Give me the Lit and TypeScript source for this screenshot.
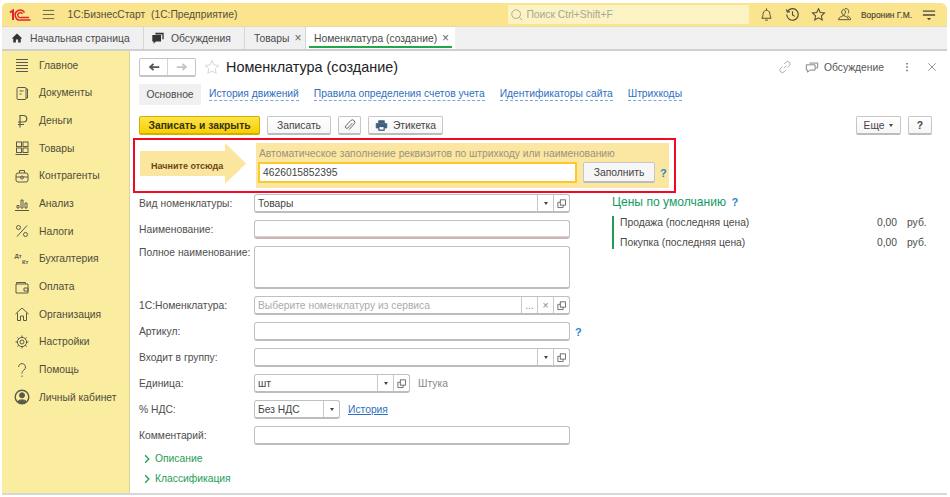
import { LitElement, html, css, svg } from 'lit';
import { customElement } from 'lit/decorators.js';

const icon = (size: number, body: unknown, color = '#5a5a4a', width = 1) => html`
  <svg width=${size} height=${size} viewBox="0 0 16 16" fill="none" stroke=${color} stroke-width=${width}>${body}</svg>
`;

const menuIcons: Record<string, unknown> = {
  main: svg`<path d="M2 2.500h12M2 5.500h12M2 8.500h12M2 11.500h12M2 14.500h12"/>`,
  docs: svg`<rect x="3" y="2.500" width="9" height="12" rx="1"/><path d="M12 4h1.500v9H12M5.500 6h4M5.500 9h2"/>`,
  money: svg`<path d="M6 14.500V2.500h3.500a3 3 0 0 1 0 6.500H4M4 11.500h6" stroke-width="1.200"/>`,
  goods: svg`<rect x="2.500" y="2" width="5" height="4.500"/><rect x="9" y="2" width="5" height="4.500"/><rect x="2.500" y="8" width="5" height="4.500"/><rect x="9" y="8" width="5" height="4.500"/><path d="M1.500 14.500h13"/>`,
  partners: svg`<rect x="2" y="5" width="12" height="9" rx="2"/><path d="M5.500 5V2.500h5V5M2 9h12"/><circle cx="8" cy="9.500" r="1.500"/>`,
  analysis: svg`<path d="M1 14.500h14M3 12V9.500h2V12zM7 12V4h2v8zM11 12V7h2v5z"/>`,
  tax: svg`<circle cx="4.500" cy="4.500" r="2"/><circle cx="11.500" cy="11.500" r="2"/><path d="M13 2.500 3 13.500"/>`,
  pay: svg`<path d="M2.500 5V3.500h9V5M2 5h12v9H2zM10 9h4v3h-4z"/>`,
  org: svg`<path d="M1.500 8 8 2l6.500 6M3.500 7v7.500h3V10h3v4.500h3V7"/>`,
  settings: svg`<circle cx="8" cy="8" r="2"/><circle cx="8" cy="8" r="4.600"/><path d="M8 1.500v2M8 12.500v2M1.500 8h2M12.500 8h2M3.400 3.400l1.400 1.400M11.200 11.200l1.400 1.400M3.400 12.600l1.400-1.400M11.200 4.800l1.400-1.400"/>`,
  help: svg`<path d="M4.500 5a3.500 3.500 0 1 1 5.500 3C8.700 9 8 9.700 8 11.500M8 13.500v1.500"/>`,
  cabinet: svg`<circle cx="8" cy="8" r="6.800" stroke-width="1.400"/><circle cx="8" cy="6.300" r="2.500" fill="#5a5a4a"/><path d="M3.600 12.600C4.600 10.300 11.400 10.300 12.400 12.600 11 14.600 5 14.600 3.600 12.600z" fill="#5a5a4a"/>`,
};

const menu = [
  ['main', 'Главное'],
  ['docs', 'Документы'],
  ['money', 'Деньги'],
  ['goods', 'Товары'],
  ['partners', 'Контрагенты'],
  ['analysis', 'Анализ'],
  ['tax', 'Налоги'],
  ['acc', 'Бухгалтерия'],
  ['pay', 'Оплата'],
  ['org', 'Организация'],
  ['settings', 'Настройки'],
  ['help', 'Помощь'],
  ['cabinet', 'Личный кабинет'],
];

const copyIcon = svg`<rect x="6.500" y="3.500" width="6.500" height="6.500"/><path d="M6.500 6.500H3.500V13H10V10"/>`;

@customElement('app-root')
class AppRoot extends LitElement {
  static styles = css`
    :host {
      display: block;
      width: 950px;
      height: 497px;
      overflow: hidden;
      background: #fff;
      font-family: 'Liberation Sans', Arial, sans-serif;
      font-size: 10.3px;
      color: #4a4a4a;
    }
    * { box-sizing: border-box; }
    svg { display: block; flex: none; }
    .app { margin: 3px 3px 0 2px; height: 492px; display: flex; flex-direction: column; border-bottom: 2px solid #d8d8d8; }

    .topbar {
      height: 24px;
      flex: none;
      background: #fae48e;
      border-radius: 5px 6px 0 0;
      display: flex;
      align-items: center;
      border-bottom: 1px solid #e9dca0;
    }
    .logo { margin-left: 7px; width: 23px; }
    .burger { margin-left: 11px; }
    .app-title { margin-left: 12px; width: 451px; color: #55513a; white-space: pre; }
    .search {
      width: 246px;
      height: 19px;
      background: #fcf3c4;
      display: flex;
      align-items: center;
      gap: 2px;
      padding-left: 2px;
      color: #a9a68f;
    }
    .top-icons { display: flex; align-items: center; margin-left: 10px; }
    .top-icons svg { margin-right: 11px; }
    .user { font-size: 8.4px; color: #4a4636; margin-left: -2px; width: 61px; white-space: nowrap; -webkit-text-stroke: 0.15px #4a4636; }

    .tabs {
      height: 24px;
      flex: none;
      background: #f0f0f0;
      border-bottom: 2px solid #cfcfcf;
      display: flex;
    }
    .tab { display: flex; align-items: center; border-right: 1px solid #d6d6d6; color: #4a4a4a; white-space: nowrap; }
    .tab .close { margin-left: 5px; font-size: 12px; color: #666; }
    .tab.home { width: 142px; padding-left: 9px; gap: 7px; }
    .tab.disc { width: 101px; padding-left: 7px; gap: 6px; }
    .tab.goods { width: 61px; padding-left: 9px; }
    .tab.active { width: 149px; padding-left: 8px; background: #fff; position: relative; border-right: 0; }
    .tab.active::after { content: ''; position: absolute; left: 3px; right: 3px; bottom: 1px; height: 2px; background: #22a64a; }

    .body { flex: 1; display: flex; min-height: 0; }
    .side { width: 128px; flex: none; background: #fbeda0; border-right: 1px solid #d9d2a4; padding-top: 0.5px; }
    .side-item { height: 27.67px; display: flex; align-items: center; color: #4f4c3a; }
    .side-icon { width: 37px; display: flex; justify-content: center; padding-left: 2px; }
    .acc { font-size: 6px; line-height: 6px; font-weight: bold; width: 14px; color: #5a5a4a; }
    .acc span { display: block; }
    .acc span + span { text-align: right; }

    .content { flex: 1; padding: 6px 0 0 9px; min-width: 0; }
    .head { display: flex; align-items: center; height: 20px; padding-right: 9px; }
    .nav { width: 57px; height: 19px; border: 1px solid #c4c4c4; border-bottom-width: 2px; border-radius: 2px; display: flex; }
    .nav div { flex: 1; display: flex; align-items: center; justify-content: center; }
    .nav div + div { border-left: 1px solid #d4d4d4; }
    .star { margin-left: 8px; }
    h1 { font-size: 14.4px; font-weight: normal; margin: 0 0 0 6px; color: #222; flex: 1; white-space: nowrap; }
    .discuss { display: flex; align-items: center; gap: 5px; color: #555; margin-left: 13px; }
    .dots { margin-left: 17px; }
    .x { margin-left: 13px; }

    .links { display: flex; align-items: center; height: 21px; margin-top: 7px; }
    .links .current { background: #f0f0f0; height: 21px; width: 62px; display: flex; align-items: center; justify-content: center; margin-right: 8px; }
    .link { color: #2f6fbf; border-bottom: 1px dashed #7ba6d8; line-height: 12px; margin-right: 15px; white-space: nowrap; }

    .actions { display: flex; margin-top: 11px; height: 19px; gap: 7px; padding-right: 15px; }
    .btn {
      height: 19px;
      border: 1px solid #c6c6c6;
      border-bottom: 2px solid #bcbcbc;
      border-radius: 2px;
      background: linear-gradient(#fff, #f6f6f6);
      display: flex;
      align-items: center;
      justify-content: center;
      gap: 5px;
      color: #444;
      white-space: nowrap;
    }
    .btn.primary { width: 121px; background: linear-gradient(#fde44a, #f7d000); border-color: #d4ae00; color: #33301a; font-weight: bold; }
    .spacer { flex: 1; }

    .notice {
      margin: 3px 0 0 -6px;
      width: 543px;
      height: 55px;
      border: 2px solid #ee0c24;
      display: flex;
      padding: 3px 5px 3px 5px;
    }
    .arrow { width: 116px; flex: none; display: flex; align-items: center; position: relative; }
    .arrow svg { position: absolute; left: 0; top: 0; }
    .arrow span { position: relative; margin-left: 11px; font-weight: bold; font-size: 9px; color: #6c4612; white-space: nowrap; }
    .fill { flex: 1; background: #fbe7a1; padding: 4px 0 0 3px; }
    .fill-title { color: #9b937a; line-height: 14px; white-space: nowrap; }
    .fill-row { display: flex; align-items: center; margin-top: 1px; margin-left: -1px; }
    .barcode {
      width: 319px;
      height: 21px;
      border: 2px solid #fbc92c;
      background: #fff;
      display: flex;
      align-items: center;
      padding-left: 3px;
      color: #444;
    }
    .fill-row .btn { width: 72px; height: 21px; margin-left: 6px; background: #f6f6f6; }
    .q { color: #2f86c9; font-weight: bold; font-size: 11px; margin-left: 5px; }

    .main { display: flex; margin-top: 1px; }
    .form { display: grid; grid-template-columns: 115px 316px 22px; row-gap: 7px; align-items: start; align-content: start; width: 473px; flex: none; }
    .label { height: 18px; display: flex; align-items: center; color: #4e4e4e; white-space: nowrap; }
    .label.top { height: 13px; }
    .field {
      height: 19px;
      border: 1px solid #c0c0c0;
      border-bottom: 2px solid #bdbdbd;
      border-radius: 3px;
      display: flex;
      align-items: stretch;
      background: #fff;
    }
    .field.tall { height: 43px; }
    .field.required { box-shadow: inset 0 -1px 0 #f8c4c4; }
    .field.unit { width: 156px; }
    .field.vat { width: 86px; }
    .value { flex: 1; padding-left: 3px; display: flex; align-items: center; white-space: nowrap; color: #444; }
    .value.hint { color: #aaa; }
    .part { width: 16px; border-left: 1px solid #c8c8c8; display: flex; align-items: center; justify-content: center; flex: none; color: #888; }
    .caret { width: 0; height: 0; border: 2.5px solid transparent; border-top: 3px solid #444; border-bottom: 0; }
    .inline { display: flex; align-items: center; gap: 8px; grid-column: span 2; }
    .inline .plain { color: #888; }
    .inline .hist { color: #2f6fbf; text-decoration: underline; }
    .side-q { height: 19px; display: flex; align-items: center; }
    .groups { grid-column: 1 / 3; margin-top: -3.5px; }
    .group { display: flex; align-items: center; gap: 3px; color: #1f9d55; height: 20px; padding-left: 3px; }

    .prices { flex: 1; padding-right: 14px; margin-top: 1px; }
    .prices h2 { margin: 0; font-size: 12.1px; font-weight: normal; color: #129a64; line-height: 15px; }
    .prices h2 b { color: #2f86c9; font-size: 11px; margin-left: 2px; }
    .price-list { margin-top: 6px; border-left: 2px solid #1f9d55; padding-left: 6px; height: 33px; display: flex; flex-direction: column; justify-content: space-between; }
    .price { display: flex; line-height: 13px; }
    .price .name { flex: 1; }
    .price .sum { width: 30px; }
    .price .cur { width: 26px; }
  `;

  private field(value: string, parts: string[] = [], cls = '', hint = false) {
    return html`
      <div class="field ${cls}">
        <div class="value ${hint ? 'hint' : ''}">${value}</div>
        ${parts.map((p) => html`<div class="part">${this.part(p)}</div>`)}
      </div>
    `;
  }

  private part(p: string) {
    if (p === 'drop') return html`<div class="caret"></div>`;
    if (p === 'copy') return icon(13, copyIcon, '#555');
    if (p === 'clear') return html`×`;
    return html`...`;
  }

  private sideIcon(key: string) {
    if (key === 'acc') return html`<div class="acc"><span>Дт</span><span>Кт</span></div>`;
    return icon(16, menuIcons[key]);
  }

  render() {
    return html`
      <div class="app">
        <div class="topbar">
          <div class="logo">
            <svg width="22" height="12" viewBox="0 0 22 12" fill="none" stroke="#e0242a">
              <path d="M1 3.500 4 1.500V11" stroke-width="2"/>
              <path d="M15.500 3.500A5 5 0 1 0 12 11H21.500" stroke-width="1.500"/>
              <path d="M13.500 5A2.500 2.500 0 1 0 12 8.500H20" stroke-width="1.300"/>
            </svg>
          </div>
          <div class="burger">${icon(13, svg`<path d="M1 3h14M1 8h14M1 13h14"/>`, '#6a6650', 1.2)}</div>
          <div class="app-title">1С:БизнесСтарт  (1С:Предприятие)</div>
          <div class="search">
            ${icon(14, svg`<circle cx="7" cy="7" r="5"/><path d="m10.500 10.500 3.500 3.500"/>`, '#a5a28c')}
            <span>Поиск Ctrl+Shift+F</span>
          </div>
          <div class="top-icons">
            ${icon(15, svg`<path d="M3 12c1.500-1.500 1-3.500 1.500-5.500C5 4.500 6.500 3.500 8 3.500s3 1 3.500 3c.5 2 0 4 1.500 5.500zM8 1.500v2M6.500 14h3"/>`, '#4f4b38')}
            ${icon(15, svg`<path d="M2.800 4.500A6.200 6.200 0 1 1 1.800 8M1.500 2.500l1 3 3-.5M8 4.500V8.500l2.500 1.500"/>`, '#4f4b38', 1.2)}
            ${icon(15, svg`<path d="m8 1.800 1.900 4.100 4.500.5-3.300 3 .9 4.400L8 11.600l-4 2.200.9-4.400-3.300-3 4.500-.5z"/>`, '#4f4b38', 1.1)}
            ${icon(15, svg`<path d="M7 2.500a3 3 0 0 0-.5 5.500V9.500c-2 .5-4.500 1.500-5 4h11c-.5-2.500-3-3.500-5-4V8A3 3 0 0 0 7 2.500zM8.500 1.800c3-.8 5 2 3.500 5M11 9.500c2 .5 3.500 2 3.500 4H13"/>`, '#4f4b38')}
            <div class="user">Воронин Г.М.</div>
            ${icon(14, svg`<path d="M1 3.500h14M1 8h14" stroke-width="1.500"/><path d="M5.500 11.500h5L8 14z" fill="#4f4b38" stroke="none"/>`, '#4f4b38')}
          </div>
        </div>

        <div class="tabs">
          <div class="tab home">
            ${icon(12, svg`<path d="M8 2 1 8.500h2V14h3.500v-4h3v4H13V8.500h2z" fill="#333" stroke="none"/>`)}
            Начальная страница
          </div>
          <div class="tab disc">
            ${icon(14, svg`<path d="M5 2h9.500v7.500H13V4H5zM1.500 4.500H11.500v7.500H5.500L3 14.500V12H1.500z" fill="#333" stroke="none"/>`)}
            Обсуждения
          </div>
          <div class="tab goods">Товары<span class="close">×</span></div>
          <div class="tab active">Номенклатура (создание)<span class="close">×</span></div>
        </div>

        <div class="body">
          <div class="side">
            ${menu.map(([key, name]) => html`
              <div class="side-item">
                <div class="side-icon">${this.sideIcon(key)}</div>
                <span>${name}</span>
              </div>
            `)}
          </div>

          <div class="content">
            <div class="head">
              <div class="nav">
                <div>${icon(14, svg`<path d="M14 8H4M7.500 4.500 3.500 8l4 3.500" stroke-width="2"/>`, '#555')}</div>
                <div>${icon(14, svg`<path d="M2 8h10M8.500 4.500l4 3.500-4 3.500" stroke-width="2"/>`, '#c4c4c4')}</div>
              </div>
              <div class="star">${icon(16, svg`<path d="m8 1.500 2 4.400 4.800.5-3.600 3.200 1 4.700L8 12l-4.200 2.300 1-4.700L1.200 6.400 6 5.900z"/>`, '#d8d8d8')}</div>
              <h1>Номенклатура (создание)</h1>
              ${icon(14, svg`<path d="M6.500 9.500l3-3M7 4.500l2-2a2.800 2.800 0 0 1 4 4l-2 2M9 11.500l-2 2a2.800 2.800 0 0 1-4-4l2-2"/>`, '#a0a0a0')}
              <div class="discuss">
                ${icon(14, svg`<path d="M5 3.500h9.500V9H12M1.500 5.500H11.500V11.500H5.500L3 14V11.500H1.500z"/>`, '#777')}
                Обсуждение
              </div>
              <div class="dots">${icon(12, svg`<path d="M8 2.500v2M8 7v2M8 11.500v2" stroke-width="2"/>`, '#666')}</div>
              <div class="x">${icon(12, svg`<path d="m3 3 10 10M13 3 3 13"/>`, '#777')}</div>
            </div>

            <div class="links">
              <div class="current">Основное</div>
              <span class="link">История движений</span>
              <span class="link">Правила определения счетов учета</span>
              <span class="link">Идентификаторы сайта</span>
              <span class="link">Штрихкоды</span>
            </div>

            <div class="actions">
              <div class="btn primary">Записать и закрыть</div>
              <div class="btn" style="width:64px">Записать</div>
              <div class="btn" style="width:23px">
                ${icon(13, svg`<path d="M11.500 5 6 11a1.800 1.800 0 0 1-2.600-2.500l6-6.500a3 3 0 0 1 4.300 4.200L7.500 13"/>`, '#666', 1.2)}
              </div>
              <div class="btn" style="width:75px">
                ${icon(13, svg`<path d="M4.500 5V2h7v3M1.500 5.500h13V11h-3v3h-7v-3h-3z" fill="#3f5f7f" stroke="#3f5f7f"/><path d="M5.500 10h5v3h-5z" fill="#fff" stroke="none"/>`, '#3f5f7f')}
                Этикетка
              </div>
              <div class="spacer"></div>
              <div class="btn" style="width:45px">Еще <div class="caret"></div></div>
              <div class="btn" style="width:24px;font-weight:bold">?</div>
            </div>

            <div class="notice">
              <div class="arrow">
                <svg width="107" height="41" viewBox="0 0 107 41"><path d="M0 8h85V0l21 20.500L85 41v-8H0z" fill="#fbe6a0"/></svg>
                <span>Начните отсюда</span>
              </div>
              <div class="fill">
                <div class="fill-title">Автоматическое заполнение реквизитов по штрихкоду или наименованию</div>
                <div class="fill-row">
                  <div class="barcode">4626015852395</div>
                  <div class="btn">Заполнить</div>
                  <span class="q">?</span>
                </div>
              </div>
            </div>

            <div class="main">
              <div class="form">
                <div class="label">Вид номенклатуры:</div>
                ${this.field('Товары', ['drop', 'copy'])}<div></div>

                <div class="label">Наименование:</div>
                ${this.field('', [], 'required')}<div></div>

                <div class="label top">Полное наименование:</div>
                ${this.field('', [], 'tall')}<div></div>

                <div class="label">1С:Номенклатура:</div>
                ${this.field('Выберите номенклатуру из сервиса', ['more', 'clear', 'copy'], '', true)}<div></div>

                <div class="label">Артикул:</div>
                ${this.field('')}<div class="side-q"><span class="q">?</span></div>

                <div class="label">Входит в группу:</div>
                ${this.field('', ['drop', 'copy'])}<div></div>

                <div class="label">Единица:</div>
                <div class="inline">
                  ${this.field('шт', ['drop', 'copy'], 'unit')}
                  <span class="plain">Штука</span>
                </div>

                <div class="label">% НДС:</div>
                <div class="inline">
                  ${this.field('Без НДС', ['drop'], 'vat')}
                  <span class="hist">История</span>
                </div>

                <div class="label">Комментарий:</div>
                ${this.field('')}<div></div>

                <div class="groups">
                  <div class="group">${icon(10, svg`<path d="m5 2 6 6-6 6" stroke-width="2"/>`, '#1f9d55')}Описание</div>
                  <div class="group">${icon(10, svg`<path d="m5 2 6 6-6 6" stroke-width="2"/>`, '#1f9d55')}Классификация</div>
                </div>
              </div>

              <div class="prices">
                <h2>Цены по умолчанию <b>?</b></h2>
                <div class="price-list">
                  <div class="price"><span class="name">Продажа (последняя цена)</span><span class="sum">0,00</span><span class="cur">руб.</span></div>
                  <div class="price"><span class="name">Покупка (последняя цена)</span><span class="sum">0,00</span><span class="cur">руб.</span></div>
                </div>
              </div>
            </div>
          </div>
        </div>
      </div>
    `;
  }
}
